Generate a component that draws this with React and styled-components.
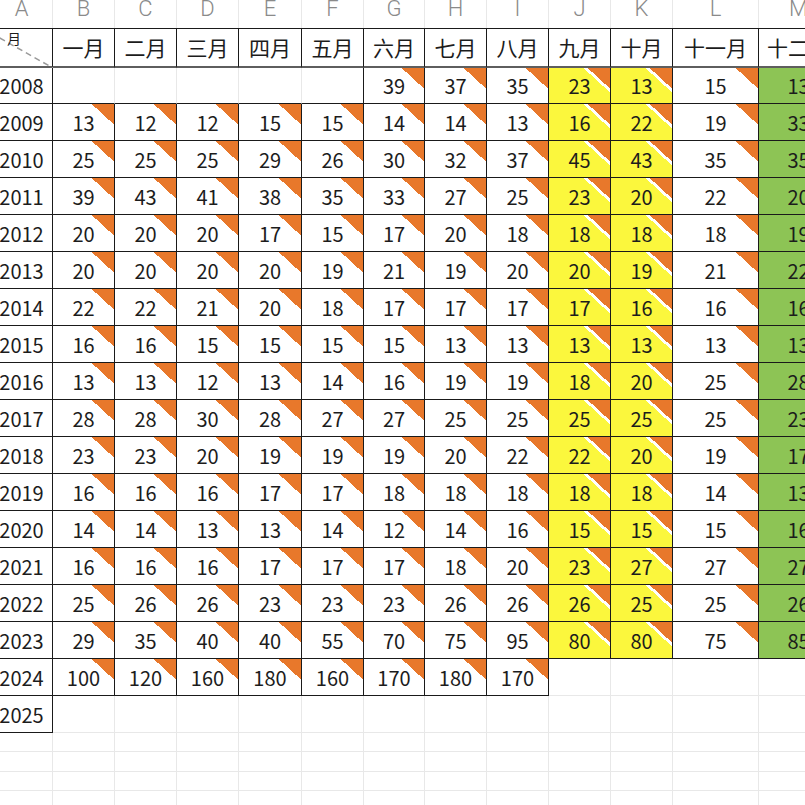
import React from 'react';
import styled, { createGlobalStyle } from 'styled-components';

const GlobalStyle = createGlobalStyle`
  html, body {
    margin: 0;
    padding: 0;
    background: #ffffff;
  }
  body {
    width: 805px;
    height: 805px;
    overflow: hidden;
  }
`;

const COLS = [62, 62, 62, 62, 63, 62, 61, 62, 62, 62, 62, 86, 80];
const LETTERS = 'ABCDEFGHIJKLM'.split('');
const MONTHS = ['一月', '二月', '三月', '四月', '五月', '六月', '七月', '八月', '九月', '十月', '十一月', '十二月'];

const DATA = [
  [2008, [null, null, null, null, null, 39, 37, 35, 23, 13, 15, 13]],
  [2009, [13, 12, 12, 15, 15, 14, 14, 13, 16, 22, 19, 33]],
  [2010, [25, 25, 25, 29, 26, 30, 32, 37, 45, 43, 35, 35]],
  [2011, [39, 43, 41, 38, 35, 33, 27, 25, 23, 20, 22, 20]],
  [2012, [20, 20, 20, 17, 15, 17, 20, 18, 18, 18, 18, 19]],
  [2013, [20, 20, 20, 20, 19, 21, 19, 20, 20, 19, 21, 22]],
  [2014, [22, 22, 21, 20, 18, 17, 17, 17, 17, 16, 16, 16]],
  [2015, [16, 16, 15, 15, 15, 15, 13, 13, 13, 13, 13, 13]],
  [2016, [13, 13, 12, 13, 14, 16, 19, 19, 18, 20, 25, 28]],
  [2017, [28, 28, 30, 28, 27, 27, 25, 25, 25, 25, 25, 23]],
  [2018, [23, 23, 20, 19, 19, 19, 20, 22, 22, 20, 19, 17]],
  [2019, [16, 16, 16, 17, 17, 18, 18, 18, 18, 18, 14, 13]],
  [2020, [14, 14, 13, 13, 14, 12, 14, 16, 15, 15, 15, 16]],
  [2021, [16, 16, 16, 17, 17, 17, 18, 20, 23, 27, 27, 27]],
  [2022, [25, 26, 26, 23, 23, 23, 26, 26, 26, 25, 25, 26]],
  [2023, [29, 35, 40, 40, 55, 70, 75, 95, 80, 80, 75, 85]],
  [2024, [100, 120, 160, 180, 160, 170, 180, 170, null, null, null, null]],
  [2025, Array(12).fill(null)],
];

const EXTRA_ROWS = [19, 20, 19, 20];

const BLACK = '#1a1a1a';
const LIGHT = '#e8e8e8';
const YELLOW = '#fbf73d';
const GREEN = '#8dc455';

const Viewport = styled.div`
  width: 805px;
  height: 805px;
  overflow: hidden;
  background: #ffffff;
`;

const Sheet = styled.div`
  display: grid;
  grid-template-columns: ${COLS.map((w) => `${w}px`).join(' ')};
  margin: -11px 0 0 -9px;
  font-family: "Noto Sans CJK SC", "Noto Sans", sans-serif;
  color: #1c1c1c;
`;

const ColLetter = styled.div`
  height: 39px;
  box-sizing: border-box;
  display: flex;
  align-items: center;
  justify-content: center;
  border-right: 1px solid ${LIGHT};
  font-family: Roboto, "Noto Sans", sans-serif;
  font-weight: 300;
  font-size: 22px;
  color: #8a8a8a;
`;

const MonthCell = styled.div`
  height: 40px;
  box-sizing: border-box;
  display: flex;
  align-items: center;
  justify-content: center;
  border-top: 1px solid ${BLACK};
  border-right: 1px solid ${BLACK};
  border-bottom: 2px solid #5e5e5e;
  font-size: 21px;
  padding-bottom: 1px;
`;

const Corner = styled(MonthCell)`
  position: relative;
  justify-content: flex-start;
  align-items: flex-start;
`;

const CornerLabel = styled.span`
  position: absolute;
  left: 16px;
  top: 0px;
  font-size: 14px;
  line-height: 18px;
`;

const CornerLine = styled.svg`
  position: absolute;
  left: 0;
  top: 0;
`;

const Cell = styled.div`
  position: relative;
  box-sizing: border-box;
  height: ${(p) => p.$h}px;
  display: flex;
  align-items: center;
  justify-content: center;
  background: ${(p) => p.$bg};
  border-right: 1px solid ${(p) => p.$right};
  border-bottom: 1px solid ${(p) => p.$bottom};
  font-size: 20px;
`;

const Mark = styled.span`
  position: absolute;
  top: 0;
  right: 0;
  width: 26px;
  height: 24px;
  background: linear-gradient(to bottom left, #e8782b 0 43%, #ffffff 43% 51%, transparent 51%);
`;

const inTable = (year, c) => {
  if (year <= 2023) return true;
  if (year === 2024) return c <= 8;
  if (year === 2025) return c === 0;
  return false;
};

const valueAt = (values, c) => (c >= 1 && c <= 12 ? values[c - 1] : null);

const bgFor = (year, c) => {
  if (year > 2023) return '#ffffff';
  if (c === 9 || c === 10) return YELLOW;
  if (c === 12) return GREEN;
  return '#ffffff';
};

const YearRow = ({ year, values, h }) => (
  <>
    {LETTERS.map((_, c) => {
      const v = valueAt(values, c);
      const has = v !== null && v !== undefined;
      const nextHas = valueAt(values, c + 1) !== null && valueAt(values, c + 1) !== undefined;
      const table = inTable(year, c);
      const right = table && (c === 0 || has || nextHas) ? BLACK : LIGHT;
      const bottom = table ? BLACK : LIGHT;
      return (
        <Cell key={c} $h={h} $bg={bgFor(year, c)} $right={right} $bottom={bottom}>
          {c === 0 ? year : has ? v : null}
          {has && <Mark />}
        </Cell>
      );
    })}
  </>
);

const BlankRow = ({ h }) => (
  <>
    {LETTERS.map((l) => (
      <Cell key={l} $h={h} $bg="#ffffff" $right={LIGHT} $bottom={LIGHT} />
    ))}
  </>
);

export default function App() {
  return (
    <Viewport>
      <GlobalStyle />
      <Sheet>
        {LETTERS.map((l) => (
          <ColLetter key={l}>{l}</ColLetter>
        ))}

        <Corner>
          <CornerLine width="62" height="40">
            <line x1="0" y1="4" x2="62" y2="39" stroke="#9a9a9a" strokeWidth="1.5" strokeDasharray="6 4" />
          </CornerLine>
          <CornerLabel>月</CornerLabel>
        </Corner>
        {MONTHS.map((m) => (
          <MonthCell key={m}>{m}</MonthCell>
        ))}

        {DATA.map(([year, values], i) => (
          <YearRow key={year} year={year} values={values} h={i === 0 ? 36 : 37} />
        ))}

        {EXTRA_ROWS.map((h, i) => (
          <BlankRow key={i} h={h} />
        ))}
      </Sheet>
    </Viewport>
  );
}
